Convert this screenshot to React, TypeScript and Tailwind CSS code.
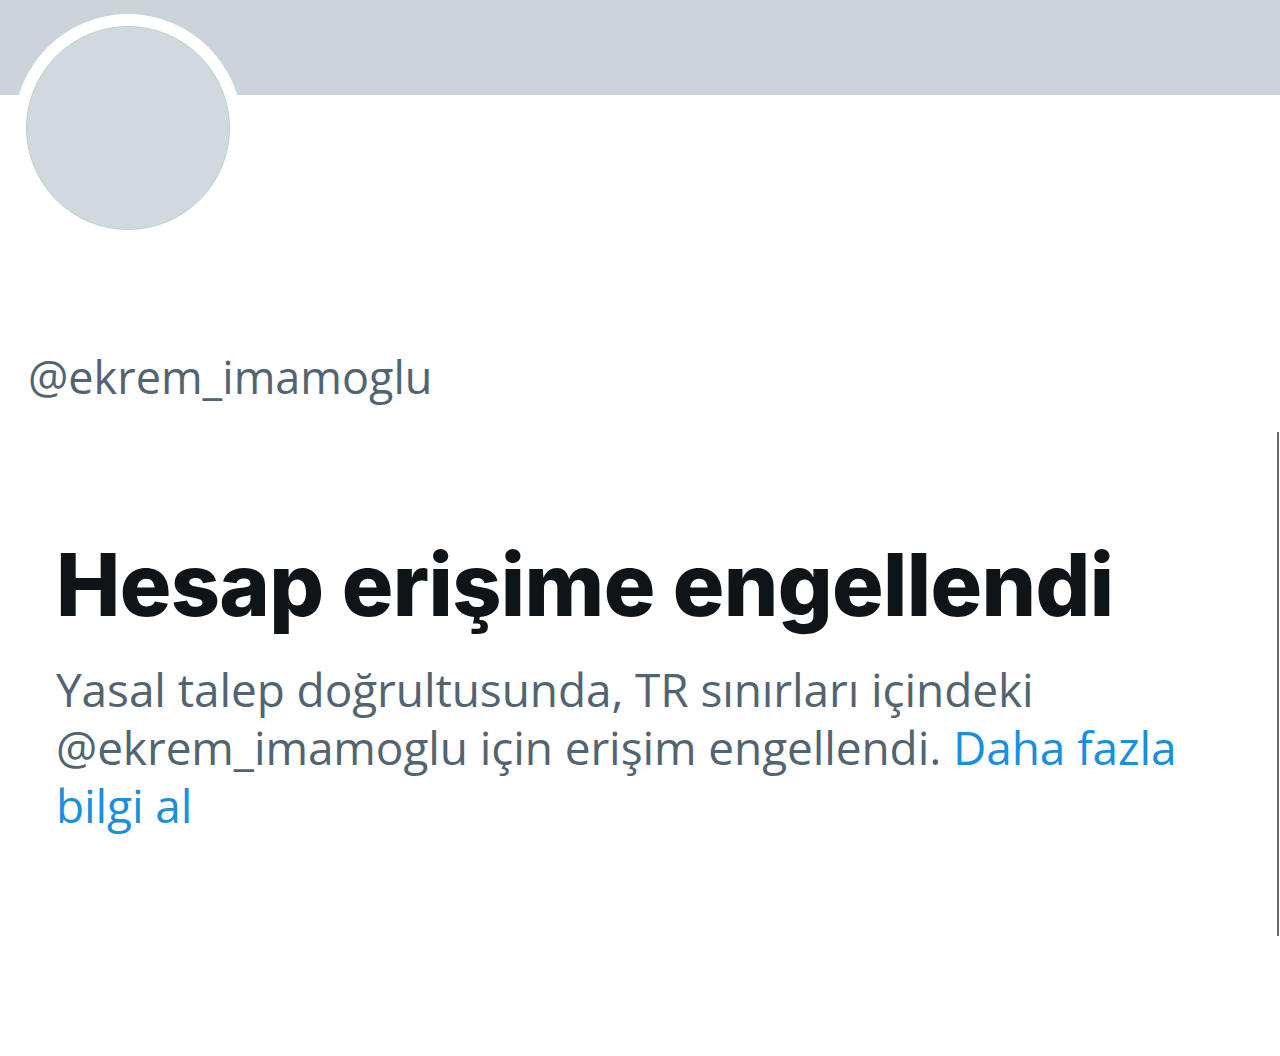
export default function App() {
  return (
    <div className="relative w-[1280px] h-[1056px] bg-white overflow-hidden" style={{ fontFamily: '"Open Sans", "Liberation Sans", sans-serif' }}>
      <div className="h-[95px] bg-[#cad4da]" />
      <div className="ml-[14px] -mt-[81px] w-[228px] h-[228px] rounded-full bg-white p-[12px] relative">
        <div className="w-full h-full rounded-full bg-[#cfd9de] border border-[#c4ced3]" />
      </div>
      <div className="pl-[28px] mt-[106px] text-[45px] leading-[58px] text-[#536471]">@ekrem_imamoglu</div>
      <div className="pl-[56px] pr-[40px] mt-[129px]">
        <h1 className="text-[86px] leading-[100px] font-extrabold text-[#0f1419] tracking-[-0.65px]" style={{ fontFamily: 'Inter, "Liberation Sans", sans-serif' }}>
          Hesap erişime engellendi
        </h1>
        <p className="mt-[25px] text-[46px] leading-[58px] text-[#536471] tracking-[-0.1px]">
          Yasal talep doğrultusunda, TR sınırları içindeki @ekrem_imamoglu için erişim engellendi.{' '}
          <span className="text-[#1a8fdc]">Daha fazla bilgi al</span>
        </p>
      </div>
      <div className="absolute left-[1277px] top-[432px] w-[2px] h-[504px] bg-[#6b6b6b]" />
    </div>
  );
}
